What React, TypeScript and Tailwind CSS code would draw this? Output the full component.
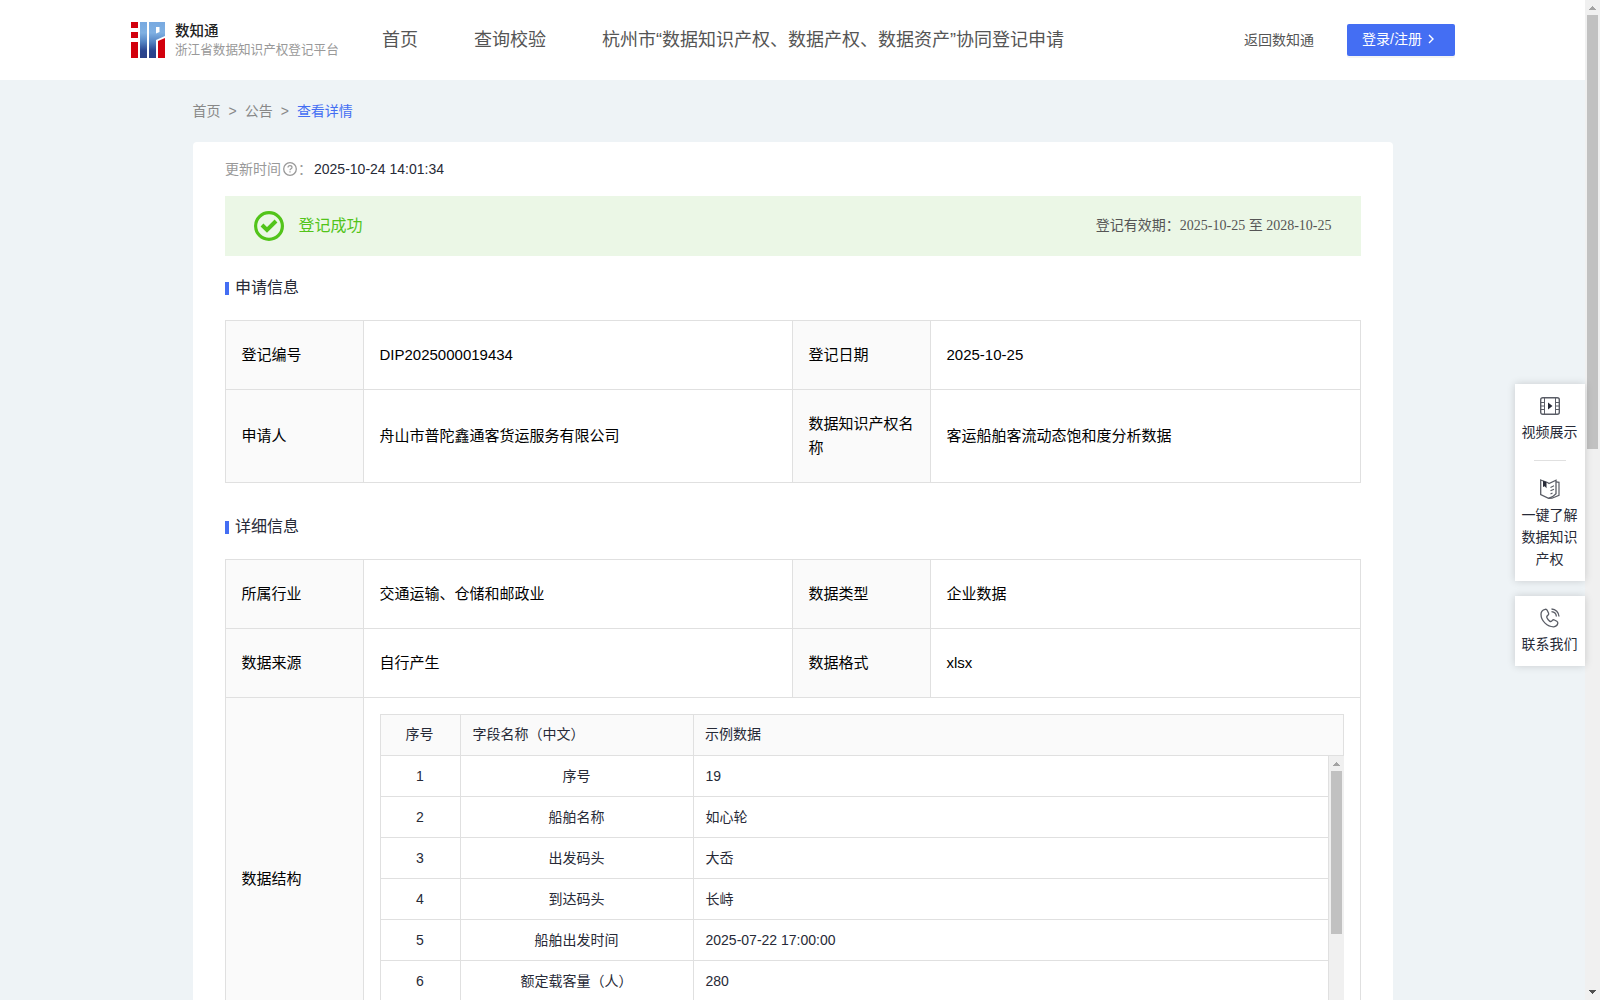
import type { ReactNode } from 'react'

const fields = [
  { name: '序号', sample: '19' },
  { name: '船舶名称', sample: '如心轮' },
  { name: '出发码头', sample: '大岙' },
  { name: '到达码头', sample: '长峙' },
  { name: '船舶出发时间', sample: '2025-07-22 17:00:00' },
  { name: '额定载客量（人）', sample: '280' },
]

function Logo() {
  return (
    <svg width="34" height="36" viewBox="0 0 34 36" className="shrink-0">
      <defs>
        <linearGradient id="blue" x1="0" y1="0" x2="0" y2="1">
          <stop offset="0" stopColor="#78a9e0" />
          <stop offset="0.3" stopColor="#7fb0e2" />
          <stop offset="0.55" stopColor="#5585c4" />
          <stop offset="0.8" stopColor="#2a4590" />
          <stop offset="1" stopColor="#2b4188" />
        </linearGradient>
      </defs>
      <g fill="#d2000d">
        <path d="M0 0h7v6H0zM0 10h7v6H0zM0 20h7v16H0z" />
        <path d="M27 19l7-3v20h-7z" />
      </g>
      <path d="M9 0h7v36H9z" fill="url(#blue)" />
      <path
        d="M18 0h16v14l-9 4v18h-7zM25 5v6.500l3.500-1.500V5z"
        fill="url(#blue)"
        fillRule="evenodd"
      />
    </svg>
  )
}

function SectionTitle({ children }: { children: ReactNode }) {
  return (
    <div className="flex h-6 items-center text-base text-[#272a37]">
      <span className="mt-[3px] mr-1.5 h-[13px] w-1 bg-[#446ef3]" />
      <span className="pt-px">{children}</span>
    </div>
  )
}

function Label({ children }: { children: ReactNode }) {
  return (
    <div className="flex items-center border-r border-b border-[#e0e0e0] bg-[#fafafa] pr-4 pb-px pl-[15.500px]">
      {children}
    </div>
  )
}

function Value({ children }: { children: ReactNode }) {
  return (
    <div className="flex items-center border-r border-b border-[#e0e0e0] px-[15.500px]">
      {children}
    </div>
  )
}

function ScrollArrow({ down }: { down?: boolean }) {
  return (
    <svg width="15" height="15" viewBox="0 0 15 15" shapeRendering="crispEdges">
      {down ? (
        <path d="M4 5h7v1H10v1H9v1H8v1H7V8H6V7H5V6H4z" fill="#505050" />
      ) : (
        <path d="M4 10h7V9h-1V8H9V7H8V6H7v1H6v1H5v1H4z" fill="#a3a3a3" />
      )}
    </svg>
  )
}

function VideoIcon() {
  return (
    <svg width="20" height="18" viewBox="0 0 20 18" fill="none" stroke="#5a5d66">
      <rect x="0.7" y="0.7" width="18.600" height="16.600" rx="2" strokeWidth="1.400" />
      <path d="M4.500 1v16M15.500 1v16M1 5.500h3.500M1 12.500h3.500M15.500 5.500H19M15.500 12.500H19M1 9h3.500M15.500 9H19" />
      <path d="M8 5.500l4.500 3.500L8 12.500z" fill="#272a37" stroke="none" />
    </svg>
  )
}

function BookIcon() {
  return (
    <svg width="20" height="20" viewBox="0 0 20 20" fill="none" stroke="#5a5d66">
      <path d="M.7 1l6.800 2.500L9 4.500l7-3.300v13.500l-3.500 3-4 1.600L.7 15.500z" strokeWidth="1.300" />
      <path d="M16 2.800l3 .5v13l-7 2.900-3.500.1" strokeWidth="1.200" />
      <path d="M10.500 8.500l3.500-1.700M10.500 11.800l3.500-1.600M10.500 15l2-1" strokeWidth="1.200" />
      <path d="M3 1.700l3.500 1.300v6.200L4.700 7.300 3 8z" fill="#272a37" stroke="none" />
    </svg>
  )
}

function PhoneIcon() {
  return (
    <svg width="20" height="20" viewBox="0 0 20 20" fill="none" stroke="#5a5d66" strokeWidth="1.300">
      <path d="M5.200 1.300C3 1.800 1 3.600 1 6.300 1 13 7.500 19 13.800 18.800c2-.1 3.600-1.600 4-3.400.2-1-.2-1.600-1-2.100l-2.400-1.300c-.8-.4-1.500-.3-2 .4-.9 1.200-1.600 1.500-2.800.7C8.300 12.200 7.400 11 6.800 9.600c-.5-1.200.2-1.800 1.200-2.500.7-.5.9-1.100.6-1.900L7.300 2.400c-.4-.9-1.100-1.300-2.100-1.100z" />
      <path d="M11.500 1c4.200.2 7.300 3.300 7.500 7.500M11.500 3.600c2.800.2 4.700 2.200 4.900 4.900" />
    </svg>
  )
}

function Header() {
  return (
    <header className="flex h-20 items-center bg-white pl-[131px]">
      <Logo />
      <div className="ml-2.5 w-[207px]">
        <p className="text-[14.500px] leading-5 font-medium text-[#222]">数知通</p>
        <p className="text-[12.600px] leading-[19px] text-[#999]">
          浙江省数据知识产权登记平台
        </p>
      </div>
      <nav className="flex gap-14 pb-px text-lg leading-6 whitespace-nowrap text-[#555]">
        <span>首页</span>
        <span>查询校验</span>
        <span>杭州市“数据知识产权、数据产权、数据资产”协同登记申请</span>
      </nav>
      <span className="mr-[33px] ml-auto text-sm text-[#555]">返回数知通</span>
      <button className="mr-[130px] flex h-8 w-[108px] items-center rounded-xs bg-[#446ef3] pl-[15px] text-sm text-white shadow-[0_2px_0_rgba(0,0,0,0.045)]">
        <span className="pb-0.5">登录/注册</span>
        <svg width="7" height="10" viewBox="0 0 7 10" className="mb-0.5 ml-1.5">
          <path d="M1 1l4 4-4 4" fill="none" stroke="currentColor" strokeWidth="1.400" />
        </svg>
      </button>
    </header>
  )
}

function FieldTable() {
  return (
    <div className="m-4 border border-b-0 border-[#e0e0e0] text-sm text-[#272a37]">
      <div className="grid h-[41px] grid-cols-[80px_233px_1fr] border-b border-[#e0e0e0] bg-[#fafafa]">
        <div className="flex items-center justify-center border-r border-[#e0e0e0] pr-0.5 pb-0.5">
          序号
        </div>
        <div className="flex items-center border-r border-[#e0e0e0] px-[11.500px] pb-0.5">
          字段名称（中文）
        </div>
        <div className="flex items-center px-[11px] pb-0.5">示例数据</div>
      </div>
      <div className="-mr-px flex h-[289px] overflow-hidden">
        <div className="grid flex-1 auto-rows-[41px] grid-cols-[80px_233px_1fr]">
          {fields.map((field, index) => (
            <div key={field.name} className="contents">
              <div className="flex items-center justify-center border-r border-b border-[#e0e0e0] pr-px">
                {index + 1}
              </div>
              <div className="flex items-center justify-center border-r border-b border-[#e0e0e0] pr-px pb-px">
                {field.name}
              </div>
              <div className="flex items-center border-r border-b border-[#e0e0e0] px-[11.500px]">
                {field.sample}
              </div>
            </div>
          ))}
        </div>
        <div className="flex w-[15px] flex-col items-center bg-[#f0f0f0]">
          <ScrollArrow />
          <div className="h-[163px] w-[11px] bg-[#c1c1c1]" />
        </div>
      </div>
    </div>
  )
}

function SideMenu() {
  return (
    <aside className="absolute top-[384px] right-[15px] flex w-[70px] flex-col gap-[15px] text-center text-sm leading-[22px] text-[#272a37]">
      <div className="flex h-[197px] flex-col items-center bg-white pt-[13px] shadow-[0_0_8px_rgba(0,0,0,0.160)]">
        <VideoIcon />
        <p className="mt-1.5 pr-px">视频展示</p>
        <div className="mt-[17px] mb-[18px] h-px w-8 shrink-0 bg-[#e0e0e0]" />
        <BookIcon />
        <p className="mt-[5px] mr-px w-14">一键了解数据知识产权</p>
      </div>
      <div className="flex h-[70px] flex-col items-center bg-white pt-3 shadow-[0_0_8px_rgba(0,0,0,0.160)]">
        <PhoneIcon />
        <p className="mt-[5px] pr-px">联系我们</p>
      </div>
    </aside>
  )
}

function App() {
  return (
    <div className="relative flex h-[1000px] w-[1600px] overflow-hidden bg-[#eef3f6] font-['Liberation_Sans','Noto_Sans_CJK_SC',sans-serif]">
      <div className="w-[1585px]">
        <Header />
        <div className="ml-[192.500px] flex h-[62px] items-center gap-2 pb-px text-sm text-[#888]">
          <span>首页</span>
          <span>&gt;</span>
          <span>公告</span>
          <span>&gt;</span>
          <span className="text-[#446ef3]">查看详情</span>
        </div>

        <main className="ml-[193px] w-[1200px] rounded-t bg-white px-8 pt-[15px]">
          <div className="flex h-6 items-center text-sm text-[#999]">
            <span className="pb-px">更新时间</span>
            <svg width="14" height="14" viewBox="0 0 14 14" fill="none" stroke="#999" className="ml-0.5">
              <circle cx="7" cy="7" r="6.300" strokeWidth="1.300" />
              <path d="M5 5.600C5 4.400 5.800 3.700 7 3.700s2 .7 2 1.700c0 1.400-2 1.400-2 2.900M7 9.300v1.200" strokeWidth="1.200" />
            </svg>
            <span className="w-[17px] pl-px">：</span>
            <span className="text-[#272a37]">2025-10-24 14:01:34</span>
          </div>

          {/* Registration status */}
          <div className="mt-[15px] flex h-[60px] items-center bg-[#ebf7e6] px-[29px]">
            <svg width="30" height="30" viewBox="0 0 30 30" fill="none" stroke="#52c41a">
              <circle cx="15" cy="15" r="13.400" strokeWidth="3.200" />
              <path d="M8 14l5 5 9-9" strokeWidth="4" />
            </svg>
            <span className="ml-[14.500px] text-base text-[#52c41a]">登记成功</span>
            <span className="mr-[0.500px] ml-auto font-['Liberation_Serif','Noto_Sans_CJK_SC',serif] text-sm text-[#555]">
              登记有效期：2025-10-25 至 2028-10-25
            </span>
          </div>

          <div className="mt-[19px] mb-[21px]">
            <SectionTitle>申请信息</SectionTitle>
          </div>
          <div className="grid grid-cols-[138px_429px_138px_430px] grid-rows-[69px_93px] border-t border-l border-[#e0e0e0] text-[15px] leading-6 text-black">
            <Label>登记编号</Label>
            <Value>DIP2025000019434</Value>
            <Label>登记日期</Label>
            <Value>2025-10-25</Value>
            <Label>申请人</Label>
            <Value>舟山市普陀鑫通客货运服务有限公司</Value>
            <Label>数据知识产权名称</Label>
            <Value>客运船舶客流动态饱和度分析数据</Value>
          </div>

          <div className="mt-[31px] mb-[21px]">
            <SectionTitle>详细信息</SectionTitle>
          </div>
          <div className="grid grid-cols-[138px_429px_138px_430px] grid-rows-[69px_69px_363px] border-t border-l border-[#e0e0e0] text-[15px] leading-6 text-black">
            <Label>所属行业</Label>
            <Value>交通运输、仓储和邮政业</Value>
            <Label>数据类型</Label>
            <Value>企业数据</Value>
            <Label>数据来源</Label>
            <Value>自行产生</Value>
            <Label>数据格式</Label>
            <Value>xlsx</Value>
            <Label>数据结构</Label>
            <div className="col-span-3 border-r border-[#e0e0e0]">
              <FieldTable />
            </div>
          </div>
        </main>
      </div>

      {/* Page scrollbar */}
      <div className="flex h-full w-[15px] flex-col items-center bg-[#f0f0f0]">
        <ScrollArrow />
        <div className="h-[434px] w-[11px] bg-[#c1c1c1]" />
        <div className="mt-auto flex">
          <ScrollArrow down />
        </div>
      </div>

      <SideMenu />
    </div>
  )
}

export default App
